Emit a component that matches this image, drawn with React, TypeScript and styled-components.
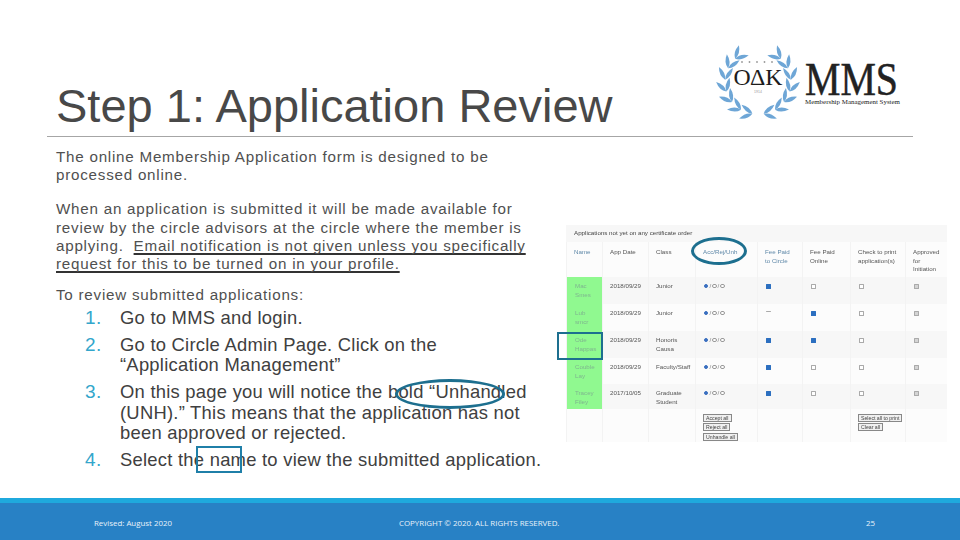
import React from 'react';
import styled, { createGlobalStyle } from 'styled-components';

const Global = createGlobalStyle`
  html, body { margin: 0; padding: 0; background: #fff; }
  #root { width: 960px; height: 540px; overflow: hidden; }
`;

const Slide = styled.div`
  position: relative; width: 960px; height: 540px; display: flex; flex-direction: column;
  background: #fff; font-family: "Liberation Sans", Arial, sans-serif; color: #404040; overflow: hidden;
`;
const Header = styled.header`
  height: 136px; margin: 0 47px; padding: 0 11px 0 9px; box-sizing: content-box; border-bottom: 1px solid #a6a6a6;
  display: flex; justify-content: space-between; align-items: flex-end;
`;
const Title = styled.h1`
  margin: 0 0 1px; font-size: 47px; line-height: 58px; font-weight: 400; color: #484848; white-space: nowrap;
`;
const Logo = styled.svg`
  width: 190px; height: 80px; margin-bottom: 14px; flex: none; overflow: visible;
`;
const Body = styled.main`
  flex: 1; min-height: 0; display: grid; grid-template-columns: 510px 381px; padding-left: 56px;
`;
const TextCol = styled.section`
  padding-top: 11px; white-space: nowrap;
`;
const Para = styled.p<{ $gap?: number }>`
  margin: 0 0 ${p => p.$gap ?? 15.4}px; font-size: 15.2px; line-height: 18.4px; letter-spacing: 0.76px; color: #505050;
`;
const Under = styled.span`
  text-decoration: underline; text-decoration-thickness: 1.5px; text-underline-offset: 2px; text-decoration-skip-ink: none; text-decoration-color: #333;
`;
const Steps = styled.ol`
  margin: -12px 0 0; padding: 0; list-style: none;
`;
const Step = styled.li`
  display: grid; grid-template-columns: 35px 1fr; padding-left: 29px; margin-bottom: 6px;
  font-size: 18.4px; line-height: 20.6px; letter-spacing: 0.25px; color: #404040;
`;
const Num = styled.span`
  color: #33a6cb; font-size: 19px; letter-spacing: 0.5px;
`;
const Shot = styled.div`
  margin-top: 88px; width: 381px; height: 217px; background: #fbfbfb; filter: blur(0.4px); overflow: hidden;
  font-size: 6.2px; color: #555;
`;
const Caption = styled.div`
  height: 17px; background: #f7f7f7; padding-left: 8px; line-height: 16px; color: #444;
`;
const COLS = '36px 46px 47px 62px 45px 48px 55px 42px';
const Row = styled.div<{ $h: number; $alt?: boolean }>`
  display: grid; grid-template-columns: ${COLS}; height: ${p => p.$h}px; background: ${p => (p.$alt ? '#f7f7f7' : '#fcfcfc')};
`;
const Cell = styled.div<{ $blue?: boolean; $green?: boolean; $head?: boolean }>`
  padding: ${p => (p.$head ? 6 : 5)}px 0 0 ${p => (p.$green ? 8 : 7)}px; line-height: 8.6px; border-left: 1px solid #f3f3f3; box-sizing: border-box; white-space: nowrap;
  color: ${p => (p.$green ? '#7fb58f' : p.$blue ? '#5f88a8' : '#555')};
  background: ${p => (p.$green ? '#90f990' : 'transparent')};
`;
const Radios = styled.div`
  display: flex; align-items: center; gap: 1px; height: 8px; color: #888; margin-left: 1px;
`;
const Radio = styled.i<{ $on?: boolean }>`
  display: block; width: 4.4px; height: 4.4px; border-radius: 50%; box-sizing: border-box;
  border: 0.6px solid ${p => (p.$on ? '#3a6fc0' : '#999')}; background: ${p => (p.$on ? '#3a6fc0' : '#fff')};
`;
const Box = styled.i<{ $on?: boolean; $off?: boolean; $dash?: boolean }>`
  display: block; width: 5px; height: ${p => (p.$dash ? 0 : 5)}px; margin: 2px 0 0 1px; box-sizing: border-box; border-radius: 0.5px;
  border: ${p => (p.$dash ? 'none' : `0.7px solid ${p.$on ? '#2c6fc0' : '#aaa'}`)};
  border-top: ${p => (p.$dash ? '0.7px solid #aaa' : undefined)};
  background: ${p => (p.$on ? '#2c6fc0' : p.$off ? '#d4d4d4' : '#fff')};
`;
const Btn = styled.span`
  display: table; border: 0.7px solid #888; background: #f0f0f0; color: #444; font-size: 5.2px; line-height: 6px; padding: 0 2px; margin-bottom: 1.4px; white-space: nowrap;
`;
const Footer = styled.footer`
  height: 37px; padding-top: 3px; box-sizing: border-box; background: #2881c5;
  display: grid; grid-template-columns: 94px 305px 467px auto; align-items: center;
  color: #e8f2fa; font-family: "Open Sans", sans-serif; white-space: nowrap;
`;
const Band = styled.div`
  height: 5px; background: #1fa9dd;
`;
const Foot = styled.span`
  font-size: 7.9px;
`;
const Ring = styled.div<{ $x: number; $y: number; $w: number; $h: number }>`
  position: absolute; left: ${p => p.$x}px; top: ${p => p.$y}px; width: ${p => p.$w}px; height: ${p => p.$h}px; box-sizing: border-box;
  border: 3px solid #1d6f8f; border-radius: 50%;
`;
const Frame = styled.div<{ $x: number; $y: number; $w: number; $h: number; $color?: string }>`
  position: absolute; left: ${p => p.$x}px; top: ${p => p.$y}px; width: ${p => p.$w}px; height: ${p => p.$h}px; box-sizing: border-box;
  border: 2.2px solid ${p => p.$color ?? '#1d6f8f'};
`;

const leaves = (() => {
  const out: { x: number; y: number; a: number }[] = [];
  const cx = 46, cy = 40, r = 33;
  for (let i = 0; i < 7; i++) {
    const t = 100 + i * 21;
    const rad = (t * Math.PI) / 180;
    const px = cx + r * Math.cos(rad), py = cy + r * 0.98 * Math.sin(rad);
    const tang = t + 90;
    out.push({ x: px, y: py, a: tang - 30 });
    out.push({ x: px, y: py, a: tang + 30 });
  }
  return out;
})();

function Laurel() {
  return (
    <g fill="#6ea6d6">
      {[0, 1].map(side => (
        <g key={side} transform={side ? 'translate(92,0) scale(-1,1)' : undefined}>
          {leaves.map((l, i) => (
            <path key={i} d="M0 0 Q6 -4 14 0 Q6 4 0 0Z" transform={`translate(${l.x.toFixed(1)},${l.y.toFixed(1)}) rotate(${l.a})`} />
          ))}
        </g>
      ))}
    </g>
  );
}

const rows = [
  { n: ['Mac', 'Smes'], d: '2018/09/29', c: ['Junior'], a: true, b: false, h: 27, alt: true },
  { n: ['Lub', 'smcr'], d: '2018/09/29', c: ['Junior'], a: false, b: true, h: 27, alt: false },
  { n: ['Ode', 'Happas'], d: '2018/09/29', c: ['Honoris', 'Causa'], a: true, b: true, h: 27, alt: true },
  { n: ['Couble', 'Lay'], d: '2018/09/29', c: ['Faculty/Staff'], a: true, b: false, h: 26, alt: false },
  { n: ['Tracey', 'Filey'], d: '2017/10/05', c: ['Graduate', 'Student'], a: true, b: false, h: 25, alt: true },
];

export default function App() {
  return (
    <Slide>
      <Global />
      <Header>
        <Title>Step 1: Application Review</Title>
        <Logo viewBox="0 0 190 80">
          <Laurel />
          {[0, 1, 2, 3, 4].map(i => <circle key={i} cx={30 + i * 7.5} cy={20} r={0.9} fill="#999" />)}
          <text x="46" y="43" textAnchor="middle" fontFamily="Liberation Serif, serif" fontSize="23" fill="#1d1d1d" textLength="49" lengthAdjust="spacingAndGlyphs">ΟΔΚ</text>
          <text x="93" y="53" fontFamily="Liberation Serif, serif" fontSize="47" fill="#222" stroke="#222" strokeWidth="0.5" textLength="93" lengthAdjust="spacingAndGlyphs">MMS</text>
          <text x="93" y="62" fontFamily="Liberation Serif, serif" fontSize="6.4" fill="#222" textLength="95" lengthAdjust="spacingAndGlyphs">Membership Management System</text>
          <text x="46" y="51" textAnchor="middle" fontFamily="Liberation Sans, sans-serif" fontSize="3.5" fill="#999">1914</text>
        </Logo>
      </Header>
      <Body>
        <TextCol>
          <Para>The online Membership Application form is designed to be<br />processed online.</Para>
          <Para $gap={12.6}>
            When an application is submitted it will be made available for<br />
            review by the circle advisors at the circle where the member is<br />
            applying.&nbsp; <Under>Email notification is not given unless you specifically</Under><br />
            <Under>request for this to be turned on in your profile.</Under>
          </Para>
          <Para>To review submitted applications:</Para>
          <Steps>
            <Step><Num>1.</Num><span>Go to MMS and login.</span></Step>
            <Step><Num>2.</Num><span>Go to Circle Admin Page. Click on the<br />“Application Management”</span></Step>
            <Step><Num>3.</Num><span>On this page you will notice the bold “Unhandled<br />(UNH).” This means that the application has not<br />been approved or rejected.</span></Step>
            <Step><Num>4.</Num><span>Select the name to view the submitted application.</span></Step>
          </Steps>
        </TextCol>
        <Shot>
          <Caption>Applications not yet on any certificate order</Caption>
          <Row $h={35}>
            <Cell $blue $head>Name</Cell>
            <Cell $head>App Date</Cell>
            <Cell $head>Class</Cell>
            <Cell $blue $head>Acc/Rej/Unh</Cell>
            <Cell $blue $head>Fee Paid<br />to Circle</Cell>
            <Cell $head>Fee Paid<br />Online</Cell>
            <Cell $head>Check to print<br />application(s)</Cell>
            <Cell $head>Approved<br />for<br />Initiation</Cell>
          </Row>
          {rows.map((r, i) => (
            <Row key={i} $h={r.h} $alt={r.alt}>
              <Cell $green>{r.n[0]}<br />{r.n[1]}</Cell>
              <Cell>{r.d}</Cell>
              <Cell>{r.c.map((x, j) => <div key={j}>{x}</div>)}</Cell>
              <Cell><Radios><Radio $on />/<Radio />/<Radio /></Radios></Cell>
              <Cell><Box $on={r.a} $dash={!r.a} /></Cell>
              <Cell><Box $on={r.b} /></Cell>
              <Cell><Box /></Cell>
              <Cell><Box $off /></Cell>
            </Row>
          ))}
          <Row $h={33}>
            <Cell />
            <Cell />
            <Cell />
            <Cell><Btn>Accept all</Btn><Btn>Reject all</Btn><Btn>Unhandle all</Btn></Cell>
            <Cell />
            <Cell />
            <Cell><Btn>Select all to print</Btn><Btn>Clear all</Btn></Cell>
            <Cell />
          </Row>
        </Shot>
      </Body>
      <Band />
      <Footer>
        <span />
        <Foot>Revised: August 2020</Foot>
        <Foot>COPYRIGHT © 2020. ALL RIGHTS RESERVED.</Foot>
        <Foot>25</Foot>
      </Footer>
      <Ring $x={691} $y={237} $w={56} $h={28} />
      <Frame $x={557} $y={332} $w={46} $h={28} />
      <Ring $x={395} $y={379} $w={110} $h={30} />
      <Frame $x={196} $y={446} $w={46} $h={27} $color="#1f7fa8" />
    </Slide>
  );
}
